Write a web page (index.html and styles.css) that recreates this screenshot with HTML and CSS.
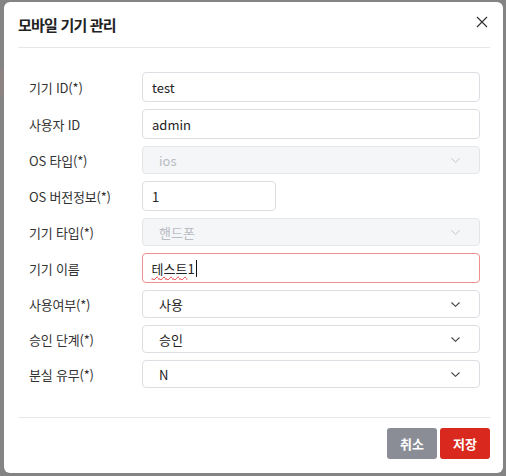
FILE: index.html
```html
<!DOCTYPE html>
<html lang="ko">
<head>
<meta charset="utf-8">
<link rel="stylesheet" href="styles.css">
</head>
<body>
<div class="backdrop">
  <div class="band"></div>
  <div class="modal">
    <div class="modal-header">
      <h1 class="title">모바일 기기 관리</h1>
      <button class="close" aria-label="닫기">
        <svg width="12" height="12" viewBox="0 0 12 12"><path d="M1 1 L11 11 M11 1 L1 11" stroke="#333" stroke-width="1.2" fill="none"/></svg>
      </button>
    </div>
    <div class="modal-body">
      <div class="row">
        <label class="label">기기 ID(*)</label>
        <div class="field input">test</div>
      </div>
      <div class="row">
        <label class="label">사용자 ID</label>
        <div class="field input">admin</div>
      </div>
      <div class="row">
        <label class="label">OS 타입(*)</label>
        <div class="field select disabled"><span>ios</span><svg class="chev" width="9" height="5" viewBox="0 0 9 5"><path d="M0.5 0.5 L4.5 4.3 L8.5 0.5" stroke="#c4c7cd" stroke-width="1" fill="none"/></svg></div>
      </div>
      <div class="row">
        <label class="label">OS 버전정보(*)</label>
        <div class="field input short">1</div>
      </div>
      <div class="row">
        <label class="label">기기 타입(*)</label>
        <div class="field select disabled"><span>핸드폰</span><svg class="chev" width="9" height="5" viewBox="0 0 9 5"><path d="M0.5 0.5 L4.5 4.3 L8.5 0.5" stroke="#c4c7cd" stroke-width="1" fill="none"/></svg></div>
      </div>
      <div class="row">
        <label class="label">기기 이름</label>
        <div class="field input error"><span class="typo">테스트</span>1<span class="caret"></span></div>
      </div>
      <div class="row">
        <label class="label">사용여부(*)</label>
        <div class="field select"><span>사용</span><svg class="chev" width="9" height="5" viewBox="0 0 9 5"><path d="M0.5 0.5 L4.5 4.3 L8.5 0.5" stroke="#444" stroke-width="1.1" fill="none"/></svg></div>
      </div>
      <div class="row">
        <label class="label">승인 단계(*)</label>
        <div class="field select"><span>승인</span><svg class="chev" width="9" height="5" viewBox="0 0 9 5"><path d="M0.5 0.5 L4.5 4.3 L8.5 0.5" stroke="#444" stroke-width="1.1" fill="none"/></svg></div>
      </div>
      <div class="row">
        <label class="label">분실 유무(*)</label>
        <div class="field select"><span>N</span><svg class="chev" width="9" height="5" viewBox="0 0 9 5"><path d="M0.5 0.5 L4.5 4.3 L8.5 0.5" stroke="#444" stroke-width="1.1" fill="none"/></svg></div>
      </div>
    </div>
    <div class="modal-footer">
      <button class="btn btn-cancel">취소</button>
      <button class="btn btn-save">저장</button>
    </div>
  </div>
</div>
</body>
</html>
```

FILE: styles.css
```css
html, body {
  margin: 0;
  padding: 0;
}
body {
  width: 506px;
  height: 476px;
  background: #848484;
  font-family: "Noto Sans CJK KR", "Noto Sans", sans-serif;
  color: #333;
  overflow: hidden;
}
.backdrop {
  position: relative;
  width: 506px;
  height: 476px;
  padding-top: 2px;
  box-sizing: border-box;
}
.band {
  position: absolute;
  left: 0;
  top: 70px;
  width: 8px;
  height: 25px;
  background: #8d8383;
}
.modal {
  position: relative;
  margin-left: 4px;
  width: 499px;
  height: 471px;
  background: #fff;
  border-radius: 6px;
  display: flex;
  flex-direction: column;
  box-sizing: border-box;
}
.modal-header {
  margin: 0 13px 0 14px;
  height: 45px;
  border-bottom: 1px solid #e6e7ea;
  display: flex;
  align-items: center;
  justify-content: space-between;
}
.title {
  margin: 0;
  font-size: 15px;
  font-weight: 700;
  letter-spacing: -0.8px;
  color: #222;
  line-height: 20px;
}
.close {
  border: 0;
  background: none;
  padding: 0;
  width: 12px;
  height: 12px;
  margin-right: 2px;
  margin-bottom: 5px;
  display: flex;
}
.modal-body {
  padding: 24px 23px 0 25px;
  display: flex;
  flex-direction: column;
  gap: 7px;
  flex: 1;
}
.row {
  display: flex;
  align-items: center;
}
.label {
  width: 113px;
  flex: none;
  font-size: 13px;
  color: #333;
  letter-spacing: -0.2px;
}
.field {
  flex: 1;
  box-sizing: border-box;
  border: 1px solid #dcdee3;
  border-radius: 4px;
  background: #fff;
  font-size: 13px;
  color: #222;
  display: flex;
  align-items: center;
}
.input {
  height: 30px;
  padding-left: 9px;
}
.input.short {
  flex: none;
  width: 134px;
}
.input.error {
  border: 1.5px solid #ee9090;
  padding-left: 8.5px;
}
.typo {
  text-decoration: underline wavy #e53935;
  text-decoration-thickness: 1px;
  text-underline-offset: 2px;
}
.caret {
  display: inline-block;
  width: 1px;
  height: 17px;
  background: #111;
  margin-left: 1px;
}
.select {
  height: 28px;
  padding: 0 19px 0 16px;
  justify-content: space-between;
}
.select.disabled {
  background: #f5f6f8;
  border-color: #e3e5e9;
  color: #b9bcc3;
}
.chev {
  display: block;
}
.modal-footer {
  margin: 0 13px 0 14px;
  border-top: 1px solid #e6e7ea;
  padding: 10px 0 14px;
  display: flex;
  justify-content: flex-end;
  gap: 3px;
}
.btn {
  width: 50px;
  height: 31px;
  border: 0;
  border-radius: 3px;
  color: #fff;
  font-family: "Noto Sans CJK KR", "Noto Sans", sans-serif;
  font-size: 13px;
  font-weight: 700;
  padding: 0;
}
.btn-cancel {
  background: #8b8d96;
}
.btn-save {
  background: #d9281e;
}
```
